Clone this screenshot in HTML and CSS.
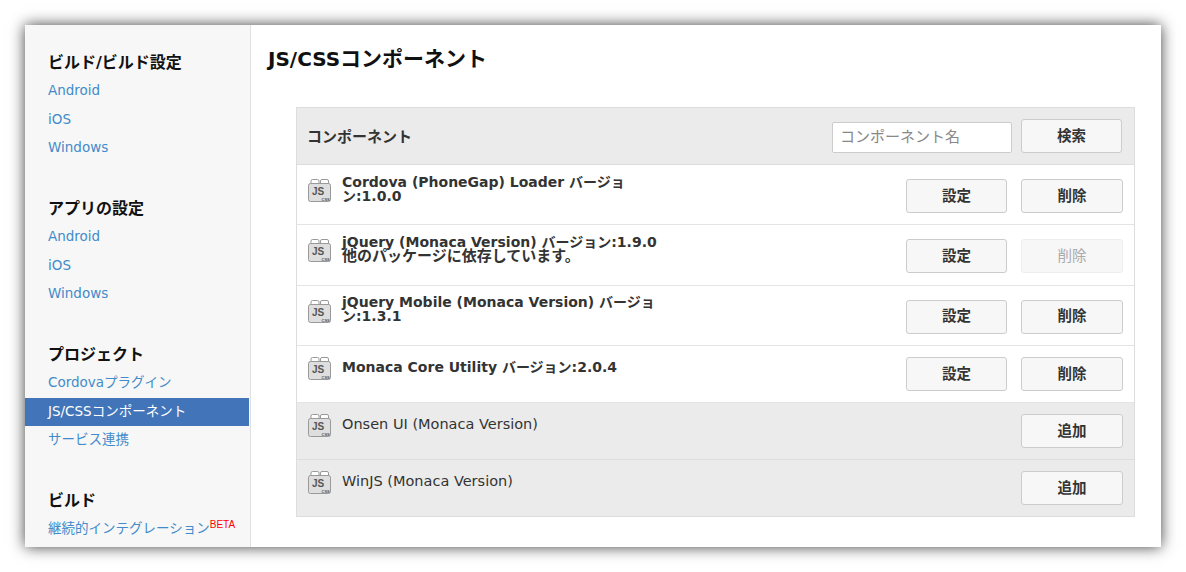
FILE: index.html
```html
<!DOCTYPE html>
<html lang="ja">
<head>
  <meta charset="UTF-8">
  <title>JS/CSSコンポーネント</title>
  <link rel="stylesheet" href="styles.css">
</head>
<body>

<div class="window">
  <div class="sidebar">
    <div class="group">
      <h3>ビルド/ビルド設定</h3>
      <a href="#">Android</a>
      <a href="#">iOS</a>
      <a href="#">Windows</a>
    </div>
    <div class="group">
      <h3>アプリの設定</h3>
      <a href="#">Android</a>
      <a href="#">iOS</a>
      <a href="#">Windows</a>
    </div>
    <div class="group">
      <h3>プロジェクト</h3>
      <a href="#">Cordovaプラグイン</a>
      <a href="#" class="active">JS/CSSコンポーネント</a>
      <a href="#">サービス連携</a>
    </div>
    <div class="group">
      <h3>ビルド</h3>
      <a href="#">継続的インテグレーション<sup class="beta">BETA</sup></a>
    </div>
  </div>

  <div class="main">
    <h2><span class="latin">JS/CSS</span>コンポーネント</h2>

    <div class="components">
      <div class="head">
        <strong>コンポーネント</strong>
        <input type="text" placeholder="コンポーネント名">
        <button class="small">検索</button>
      </div>

      <div class="row tall">
        <svg class="icon" viewBox="0 0 23 23"><path class="lugs" d="M3 5V2Q3 .5 4.500 .5H9.500Q11 .5 11 2V5M12.500 5V2Q12.500 .5 14 .5H19Q20.500 .5 20.500 2V5"/><rect class="box" x=".5" y="4.500" width="22" height="18" rx="2"/><text class="js" x="4" y="16">JS</text><text class="css" x="13.500" y="22">CSS</text></svg>
        <div class="name"><b>Cordova (PhoneGap) Loader バージョン:1.0.0</b></div>
        <button class="small">設定</button>
        <button>削除</button>
      </div>
      <div class="row tall">
        <svg class="icon" viewBox="0 0 23 23"><path class="lugs" d="M3 5V2Q3 .5 4.500 .5H9.500Q11 .5 11 2V5M12.500 5V2Q12.500 .5 14 .5H19Q20.500 .5 20.500 2V5"/><rect class="box" x=".5" y="4.500" width="22" height="18" rx="2"/><text class="js" x="4" y="16">JS</text><text class="css" x="13.500" y="22">CSS</text></svg>
        <div class="name"><b>jQuery (Monaca Version) バージョン:1.9.0</b><br><b class="note">他のパッケージに依存しています。</b></div>
        <button class="small">設定</button>
        <button disabled>削除</button>
      </div>
      <div class="row tall">
        <svg class="icon" viewBox="0 0 23 23"><path class="lugs" d="M3 5V2Q3 .5 4.500 .5H9.500Q11 .5 11 2V5M12.500 5V2Q12.500 .5 14 .5H19Q20.500 .5 20.500 2V5"/><rect class="box" x=".5" y="4.500" width="22" height="18" rx="2"/><text class="js" x="4" y="16">JS</text><text class="css" x="13.500" y="22">CSS</text></svg>
        <div class="name"><b>jQuery Mobile (Monaca Version) バージョン:1.3.1</b></div>
        <button class="small">設定</button>
        <button>削除</button>
      </div>
      <div class="row">
        <svg class="icon" viewBox="0 0 23 23"><path class="lugs" d="M3 5V2Q3 .5 4.500 .5H9.500Q11 .5 11 2V5M12.500 5V2Q12.500 .5 14 .5H19Q20.500 .5 20.500 2V5"/><rect class="box" x=".5" y="4.500" width="22" height="18" rx="2"/><text class="js" x="4" y="16">JS</text><text class="css" x="13.500" y="22">CSS</text></svg>
        <div class="name"><b>Monaca Core Utility バージョン:2.0.4</b></div>
        <button class="small">設定</button>
        <button>削除</button>
      </div>
      <div class="row off">
        <svg class="icon" viewBox="0 0 23 23"><path class="lugs" d="M3 5V2Q3 .5 4.500 .5H9.500Q11 .5 11 2V5M12.500 5V2Q12.500 .5 14 .5H19Q20.500 .5 20.500 2V5"/><rect class="box" x=".5" y="4.500" width="22" height="18" rx="2"/><text class="js" x="4" y="16">JS</text><text class="css" x="13.500" y="22">CSS</text></svg>
        <div class="name">Onsen UI (Monaca Version)</div>
        <button>追加</button>
      </div>
      <div class="row off">
        <svg class="icon" viewBox="0 0 23 23"><path class="lugs" d="M3 5V2Q3 .5 4.500 .5H9.500Q11 .5 11 2V5M12.500 5V2Q12.500 .5 14 .5H19Q20.500 .5 20.500 2V5"/><rect class="box" x=".5" y="4.500" width="22" height="18" rx="2"/><text class="js" x="4" y="16">JS</text><text class="css" x="13.500" y="22">CSS</text></svg>
        <div class="name">WinJS (Monaca Version)</div>
        <button>追加</button>
      </div>
    </div>
  </div>
</div>

</body>
</html>
```

FILE: styles.css
```css
html, body {
  height: 100%;
}

body {
  margin: 0;
  padding: 25px;
  box-sizing: border-box;
  background: white;
  color: #333;
  font-family: "DejaVu Sans", "Noto Sans CJK JP", sans-serif;
  font-size: 14px;
  overflow: hidden;
}

.window {
  display: flex;
  height: 522px;
  background: white;
  box-shadow: 0 0 14px rgba(0,0,0,0.75);
  overflow: hidden;
}

.sidebar {
  width: 225px;
  flex-shrink: 0;
  background: #f7f7f7;
  border-right: 1px solid #e0e0e0;
  padding-top: 27px;
}

.group {
  margin-bottom: 36.5px;
}

.group h3 {
  margin: 0;
  padding-left: 23px;
  height: 24px;
  line-height: 22px;
  font-size: 16px;
  color: #111;
}

.group a {
  display: block;
  height: 28.5px;
  line-height: 28.5px;
  padding-left: 23px;
  color: #428bca;
  text-decoration: none;
  font-size: 13.5px;
}

.group a.active {
  height: 28px;
  line-height: 27px;
  margin: 1px 1px -0.5px 0;
  background: #4174b8;
  color: white;
}

.beta {
  color: red;
  font-size: 10px;
  line-height: 0;
  font-family: "Liberation Sans", sans-serif;
}

.main {
  flex: 1;
  padding: 0 26px 0 17px;
}

.main h2 {
  margin: 20px 0 33px;
  height: 29px;
  line-height: 29px;
  font-size: 21px;
  color: #111;
}

.main h2 .latin {
  font-size: 20px;
}

.components {
  margin-left: 28px;
  border: 1px solid #ddd;
  border-bottom-width: 0;
}

.head {
  display: flex;
  align-items: center;
  height: 56px;
  padding: 0 12px 0 10px;
  background: #ebebeb;
  border-bottom: 1px solid #ddd;
}

.head strong {
  flex: 1;
  font-size: 15px;
  margin-top: -2px;
}

.head input {
  width: 180px;
  height: 31px;
  box-sizing: border-box;
  padding: 0 7px;
  margin: 2px 9px 0 0;
  border: 1px solid #ccc;
  border-radius: 2px;
  font: 15px "DejaVu Sans", "Noto Sans CJK JP", sans-serif;
}

.head input::placeholder {
  color: #888;
}

.row {
  display: flex;
  align-items: flex-start;
  gap: 14px;
  padding: 11px;
  border-bottom: 1px solid #e4e4e4;
}

.row.tall {
  padding-top: 14px;
  padding-bottom: 11.4px;
}

.row.off {
  background: #ebebeb;
  border-bottom-color: #ddd;
}

.icon {
  width: 23px;
  height: 23px;
  margin-right: -3px;
  flex-shrink: 0;
}

.lugs {
  fill: white;
  stroke: #999;
}

.box {
  fill: #dedede;
  stroke: #999;
}

.js {
  font: bold 10px "Liberation Sans", sans-serif;
  fill: #555;
}

.css {
  font: bold 4px "Liberation Sans", sans-serif;
  fill: #555;
}

.name {
  width: 320px;
  margin-top: 3px;
  margin-right: auto;
  font-size: 14px;
  line-height: 14px;
}

.row.tall .name {
  margin-top: -4.4px;
}

.note {
  font-size: 15px;
}

.row.off .name {
  margin-top: 2px;
  line-height: 16px;
  font-size: 14.5px;
}

button {
  width: 102px;
  height: 34px;
  padding: 0 0 4px;
  background: #f7f7f7;
  border: 1px solid #ccc;
  border-radius: 3px;
  color: #333;
  font: bold 14.5px "DejaVu Sans", "Noto Sans CJK JP", sans-serif;
  cursor: pointer;
}

button.small {
  width: 101px;
}

button:disabled {
  border-color: #eee;
  color: #aaa;
  font-weight: normal;
}
```
